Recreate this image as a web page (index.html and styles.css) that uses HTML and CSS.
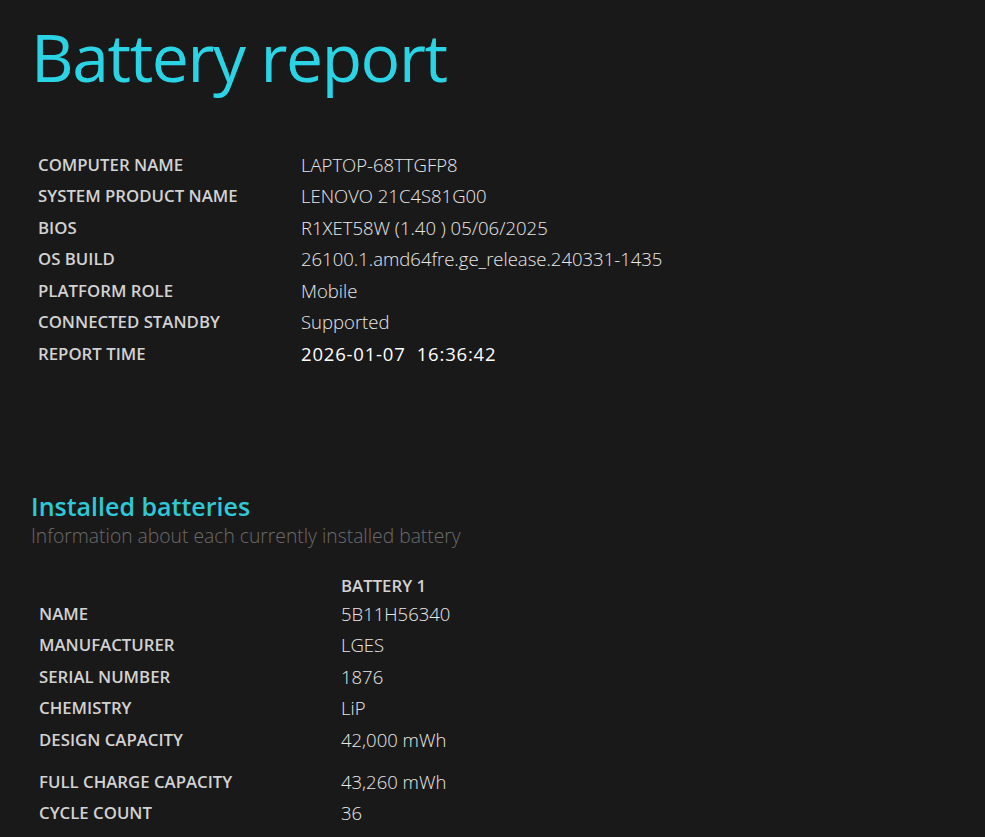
FILE: index.html
```html
<!DOCTYPE html>
<html>
<head>
<meta charset="utf-8">
<title>Battery report</title>
<link rel="stylesheet" href="styles.css">
</head>
<body>
<h1 class="title">Battery report</h1>
<table class="info">
  <tr><td class="label">COMPUTER NAME</td><td class="value">LAPTOP-68TTGFP8</td></tr>
  <tr><td class="label">SYSTEM PRODUCT NAME</td><td class="value">LENOVO 21C4S81G00</td></tr>
  <tr><td class="label">BIOS</td><td class="value">R1XET58W (1.40 ) 05/06/2025</td></tr>
  <tr><td class="label">OS BUILD</td><td class="value">26100.1.amd64fre.ge_release.240331-1435</td></tr>
  <tr><td class="label">PLATFORM ROLE</td><td class="value">Mobile</td></tr>
  <tr><td class="label">CONNECTED STANDBY</td><td class="value">Supported</td></tr>
  <tr><td class="label">REPORT TIME</td><td class="value time">2026-01-07&nbsp; 16:36:42</td></tr>
</table>
<h2 class="section">Installed batteries</h2>
<div class="desc">Information about each currently installed battery</div>
<table class="batt">
  <tr class="head"><td></td><td class="label">BATTERY 1</td></tr>
  <tr><td class="label">NAME</td><td class="value">5B11H56340</td></tr>
  <tr><td class="label">MANUFACTURER</td><td class="value">LGES</td></tr>
  <tr><td class="label">SERIAL NUMBER</td><td class="value">1876</td></tr>
  <tr><td class="label">CHEMISTRY</td><td class="value">LiP</td></tr>
  <tr class="spaced"><td class="label">DESIGN CAPACITY</td><td class="value">42,000 mWh</td></tr>
  <tr><td class="label">FULL CHARGE CAPACITY</td><td class="value">43,260 mWh</td></tr>
  <tr><td class="label">CYCLE COUNT</td><td class="value">36</td></tr>
</table>
</body>
</html>
```
FILE: styles.css
```css
html, body {
  background: #1a1919;
}
body {
  margin: 0;
  padding: 0 0 0 31px;
  font-family: "Open Sans", "Noto Sans", sans-serif;
  color: #dcdcdc;
  overflow: hidden;
}
.title {
  margin: 11px 0 0 0;
  font-size: 66px;
  font-weight: 400;
  color: #2ad4e4;
  line-height: 90px;
  letter-spacing: -1.4px;
}
.info {
  border-collapse: collapse;
  margin: 47.5px 0 0 0;
}
.info td {
  padding: 0;
  height: 31.6px;
  line-height: 31.6px;
}
.label {
  font-size: 16.8px;
  font-weight: 600;
  color: #d2d2d2;
  padding-left: 7px !important;
  width: 263px;
}
.value {
  font-size: 18.5px;
  font-weight: 300;
  color: #e8e8e8;
}
.value.time {
  font-weight: 400;
  color: #ffffff;
  letter-spacing: 0.8px;
}
.section {
  margin: 121.5px 0 0 0;
  font-size: 25px;
  font-weight: 600;
  color: #2ec9d6;
  line-height: 30px;
}
.desc {
  font-size: 19.3px;
  font-weight: 300;
  color: #6a6a6a;
  line-height: 30px;
}
.batt {
  border-collapse: collapse;
  margin-top: 19.5px;
}
.batt td {
  padding: 0;
  height: 31.5px;
  line-height: 31.5px;
}
.batt .label {
  width: 302px;
  padding-left: 8px !important;
}
.batt .head td {
  height: 27px;
  line-height: 24px;
  vertical-align: bottom;
}
.batt .head .label {
  padding-left: 0 !important;
}
.batt .spaced td {
  height: 42px;
  vertical-align: top;
}
```
